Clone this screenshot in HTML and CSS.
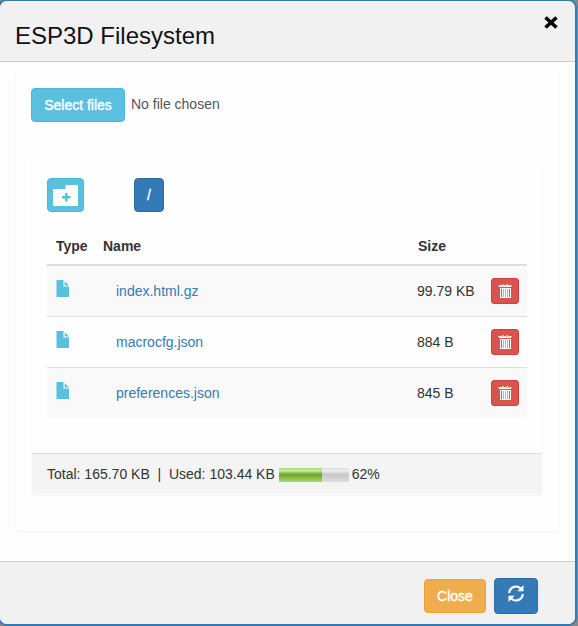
FILE: index.html
```html
<!DOCTYPE html>
<html lang="en">
<head>
<meta charset="utf-8">
<title>ESP3D Filesystem</title>
<link rel="stylesheet" href="styles.css">
</head>
<body>
<svg class="symbols" width="0" height="0">
  <symbol id="file" viewBox="0 0 14 18"><path d="M0.500 0h7v6.500H13V17H.5z"/><path d="M8.700 1.200l4.300 4.300H8.700z"/></symbol>
  <symbol id="trash" viewBox="0 0 14 14"><path opacity=".75" d="M4 0h1.500v1H4zM8.500 0H10v1H8.500zM0 1h14v1H0z"/><path fill-rule="evenodd" d="M1 2h12v1H1zM2 4h11v10H2zM3 5v8h1V5zM11 5v8h1V5z"/><path fill="#d9534f" opacity=".55" d="M5 5h1v8H5zM7 5h1v8H7zM9 5h1v8H9z"/></symbol>
</svg>
<div class="modal">
  <header class="modal-header">
    <h1>ESP3D Filesystem</h1>
    <svg class="dismiss" viewBox="0 0 14 13"><path d="M1.500 1.500l11 10M12.500 1.500l-11 10"/></svg>
  </header>
  <main class="modal-body">
    <section class="panel">
      <div class="upload"><button class="btn info select">Select files</button><span>No file chosen</span></div>
      <div class="files">
        <div class="toolbar">
          <button class="btn info folder" aria-label="New folder"><svg width="25" height="21" viewBox="0 0 25 21"><path fill-rule="evenodd" d="M0 5q0-1 1-1h11.500V1q0-1 1-1H24q1 0 1 1v19q0 1-1 1H1q-1 0-1-1zM12 8v3H9v2.500h3v3h2.500v-3h3V11h-3V8z"/></svg></button>
          <button class="btn primary root">/</button>
        </div>
        <div class="table">
          <div class="row head"><span>Type</span><span>Name</span><span>Size</span></div>
          <div class="row odd"><svg class="file"><use href="#file"/></svg><a>index.html.gz</a><span>99.79 KB</span><button class="btn danger" aria-label="Delete"><svg><use href="#trash"/></svg></button></div>
          <div class="row"><svg class="file"><use href="#file"/></svg><a>macrocfg.json</a><span>884 B</span><button class="btn danger" aria-label="Delete"><svg><use href="#trash"/></svg></button></div>
          <div class="row odd"><svg class="file"><use href="#file"/></svg><a>preferences.json</a><span>845 B</span><button class="btn danger" aria-label="Delete"><svg><use href="#trash"/></svg></button></div>
        </div>
        <div class="usage"><span>Total: 165.70 KB &nbsp;|&nbsp; Used: 103.44 KB</span><div class="meter"><div class="used" style="width:62%"></div></div><span>62%</span></div>
      </div>
    </section>
  </main>
  <footer class="modal-footer">
    <button class="btn warning">Close</button>
    <button class="btn primary refresh" aria-label="Refresh"><svg width="16" height="17" viewBox="0 0 16 17"><path class="arc" d="M1.200 8A6.800 6.800 0 0 1 12.500 3.300M14.800 9A6.800 6.800 0 0 1 3.500 13.700"/><path d="M15.500 0v6.200H9.300zM.5 17v-6.200h6.200z"/></svg></button>
  </footer>
</div>
</body>
</html>
```

FILE: styles.css
```css
* { box-sizing: border-box; }
html { background: #888; overflow: hidden; }
body { margin: 0; font: 14px/20px "Liberation Sans", Arial, sans-serif; color: #333; }
.symbols { display: block; height: 0; }
svg { display: block; fill: currentColor; }
.modal { width: 579px; height: 627px; margin: -1px 0 0 -2px; border: 2px solid #337ab7; border-radius: 9px; background: #fdfdfd; overflow: hidden; display: flex; flex-direction: column; }
.modal-header { height: 61px; background: #f1f1f1; border-bottom: 1px solid #ccc; padding: 14px 17px 0 15px; display: flex; justify-content: space-between; flex: none; }
h1 { margin: 7px 0 0; font-size: 24px; line-height: 28px; font-weight: 400; color: #111; }
.dismiss { width: 14px; height: 13px; margin-top: 1px; }
.dismiss path { stroke: #000; stroke-width: 3.6; fill: none; }
.modal-body { height: 499px; padding: 10px 15px 0; flex: none; }
.panel { width: 544px; height: 460px; padding: 16px 15px 15px; background: #fefefe; border: 1px solid #fafafa; border-top: 0; border-bottom-color: #f2f2f2; border-radius: 4px; }
.upload { display: flex; align-items: center; gap: 6px; height: 34px; color: #555; }
.upload span { margin-top: -2px; }
.btn { font: inherit; color: #fff; border: 1px solid; border-radius: 4px; padding: 0; display: flex; align-items: center; justify-content: center; height: 34px; -webkit-text-stroke: .35px; }
.info { background: #5bc0de; border-color: #46b8da; }
.primary { background: #337ab7; border-color: #2e6da4; }
.danger { background: #d9534f; border-color: #d43f3a; }
.warning { background: #f0ad4e; border-color: #eea236; }
.select { width: 94px; }
.files { width: 512px; height: 335px; margin-top: 39px; border: 1px solid #fafafa; border-top: 0; border-bottom-color: #f2f2f2; border-radius: 4px; }
.toolbar { display: flex; gap: 50px; padding: 17px 15px 0; }
.folder { width: 37px; }
.root { width: 30px; }
.table { width: 480px; margin: 17px 0 0 15px; }
.row { height: 51px; display: grid; grid-template-columns: 69px 301px 74px 28px; align-items: center; border-top: 1px solid #ddd; }
.head { height: 35px; grid-template-columns: 47px 315px 100px; padding: 0 0 2px 9px; border: 0; font-weight: 700; }
.head + .row { border-top-width: 2px; height: 52px; }
.odd { background: #f9f9f9; }
.file { width: 14px; height: 18px; margin: -5px 0 0 9px; color: #5bc0de; }
.row a { color: #337ab7; }
.danger { width: 28px; height: 26px; border-radius: 3px; }
.danger svg { width: 14px; height: 14px; }
.usage { display: flex; align-items: center; height: 41px; margin-top: 35px; padding: 0 15px; background: #f4f4f4; border-top: 1px solid #ddd; border-radius: 0 0 3px 3px; }
.meter { width: 70px; height: 14px; margin: 1px 3px 0 4px; background: linear-gradient(#ddd, #eee 20%, #c9c9c9 45%, #cdcdcd 60%, #ddd); }
.used { height: 100%; background: linear-gradient(#a6d978, #c5ee9d 20%, #75a52c 45%, #7bac32 60%, #acdd77); }
.modal-footer { flex: 1; background: #f1f1f1; border-top: 1px solid #ccc; padding: 16px 37px 0; display: flex; align-items: flex-start; justify-content: flex-end; gap: 8px; }
.modal-footer .warning { width: 62px; margin-top: 1px; }
.refresh { width: 44px; height: 36px; }
.refresh svg { margin-top: -5px; }
.arc { fill: none; stroke: currentColor; stroke-width: 2.2; }
```
